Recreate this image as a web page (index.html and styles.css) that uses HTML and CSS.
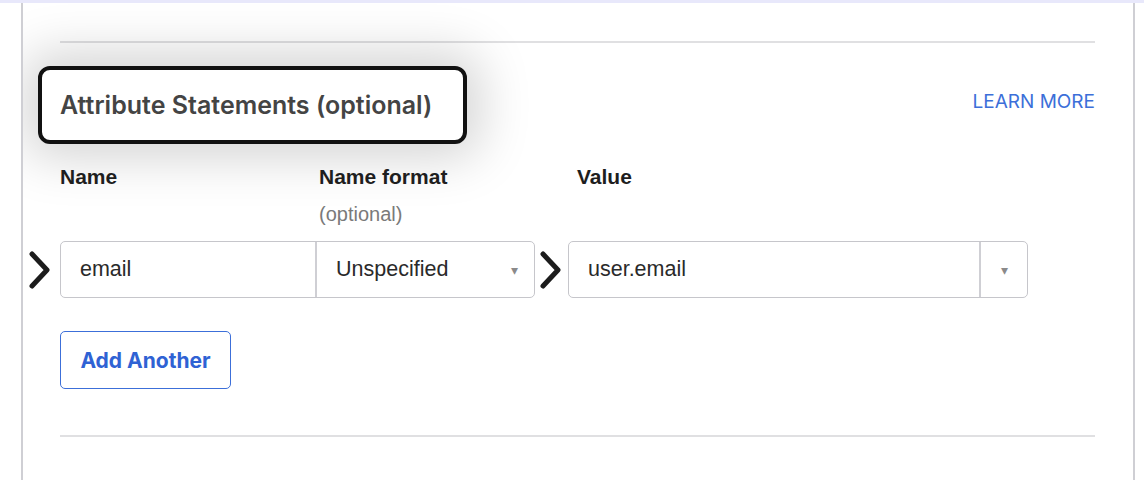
FILE: index.html
```html
<!DOCTYPE html>
<html lang="en">
<head>
<meta charset="utf-8">
<title>Attribute Statements</title>
<link rel="stylesheet" href="styles.css">
</head>
<body>
<div class="topstrip"></div>
<div class="frame">
  <div class="panel">
    <div class="rule"></div>
    <div class="head-row">
      <div class="callout"><h2 class="title">Attribute Statements (optional)</h2></div>
      <a class="learn" href="#">LEARN MORE</a>
    </div>
    <div class="labels">
      <div class="lbl">Name</div>
      <div class="lbl">Name format<span class="opt">(optional)</span></div>
      <div class="lbl">Value</div>
    </div>
    <div class="fields">
      <svg class="chev chev-a" viewBox="0 0 24 40" width="24" height="40"><path d="M4 4 L19 20 L4 36" fill="none" stroke="#1c1c1c" stroke-width="5" stroke-linecap="round" stroke-linejoin="round"/></svg>
      <div class="pair">
        <div class="input name-in">email</div>
        <div class="input select-in"><span>Unspecified</span><span class="caret">▾</span></div>
      </div>
      <svg class="chev chev-b" viewBox="0 0 24 40" width="24" height="40"><path d="M4 4 L19 20 L4 36" fill="none" stroke="#1c1c1c" stroke-width="5" stroke-linecap="round" stroke-linejoin="round"/></svg>
      <div class="input value-in"><span class="val-text">user.email</span><span class="val-btn"><span class="caret">▾</span></span></div>
    </div>
    <button class="add-btn">Add Another</button>
    <div class="rule bottom"></div>
  </div>
</div>
</body>
</html>
```
FILE: styles.css
```css
html, body {
  margin: 0;
  padding: 0;
  background: #fff;
}
body {
  width: 1144px;
  height: 480px;
  overflow: hidden;
  position: relative;
  font-family: "Liberation Sans", Arial, sans-serif;
}
.topstrip {
  height: 3px;
  background: #e8e8fb;
}
.frame {
  margin-left: 21px;
  width: 1110px;
  border-left: 2px solid #cfcfd4;
  border-right: 2px solid #cfcfd4;
  height: 477px;
  overflow: hidden;
}
.panel {
  padding: 0 38px 0 37px;
}
.rule {
  height: 2px;
  background: #e0e0e2;
  margin-top: 38px;
}
.rule.bottom {
  margin-top: 46px;
}
.head-row {
  display: flex;
  justify-content: space-between;
  align-items: center;
  margin-top: 23px;
}
.callout {
  margin-left: -22px;
  border: 4px solid #111;
  border-radius: 12px;
  padding: 0 31px 0 18px;
  height: 70px;
  display: flex;
  align-items: center;
  background: #fff;
  box-shadow: 0 0 50px 14px rgba(0, 0, 0, 0.17);
}
.title {
  margin: 0;
  font-family: "Inter", "Noto Sans", sans-serif;
  font-weight: 600;
  font-size: 25px;
  color: #444;
}
.learn {
  font-family: "Inter", "Noto Sans", sans-serif;
  font-size: 19px;
  color: #3c6fd9;
  text-decoration: none;
  margin-top: -8px;
}
.labels {
  display: grid;
  grid-template-columns: 259px 258px 1fr;
  margin-top: 20px;
}
.lbl {
  font-weight: bold;
  font-size: 21px;
  color: #1e1e1e;
  line-height: 26px;
}
.opt {
  display: block;
  font-weight: normal;
  color: #7a7a7a;
  font-size: 20px;
  margin-top: 11px;
}
.fields {
  position: relative;
  display: flex;
  align-items: center;
  margin-top: 14px;
  height: 57px;
}
.pair {
  display: flex;
  height: 57px;
  width: 475px;
  border: 1.5px solid #c6c6cb;
  border-radius: 5px;
  box-sizing: border-box;
}
.input {
  box-sizing: border-box;
  height: 100%;
  display: flex;
  align-items: center;
  font-size: 21.5px;
  color: #2a2a2a;
}
.name-in {
  width: 256px;
  padding-left: 19px;
  border-right: 2px solid #cfcfd4;
}
.select-in {
  flex: 1;
  padding: 0 16px 0 19px;
  justify-content: space-between;
}
.caret {
  font-size: 14px;
  color: #8a8a8a;
}
.value-in {
  margin-left: 33px;
  width: 460px;
  height: 57px;
  border: 1.5px solid #c6c6cb;
  border-radius: 5px;
}
.val-text {
  flex: 1;
  padding-left: 19px;
}
.val-btn {
  width: 46px;
  height: 100%;
  border-left: 2px solid #cfcfd4;
  display: flex;
  align-items: center;
  justify-content: center;
}
.chev {
  position: absolute;
  top: 9px;
}
.chev-a {
  left: -32px;
}
.chev-b {
  left: 479px;
}
.add-btn {
  display: block;
  margin-top: 33px;
  width: 171px;
  height: 58px;
  border: 1.5px solid #3c6fd9;
  border-radius: 5px;
  background: #fff;
  color: #2f62d4;
  font-family: "Inter", "Noto Sans", sans-serif;
  font-weight: 700;
  font-size: 21px;
  padding: 0;
}
```
